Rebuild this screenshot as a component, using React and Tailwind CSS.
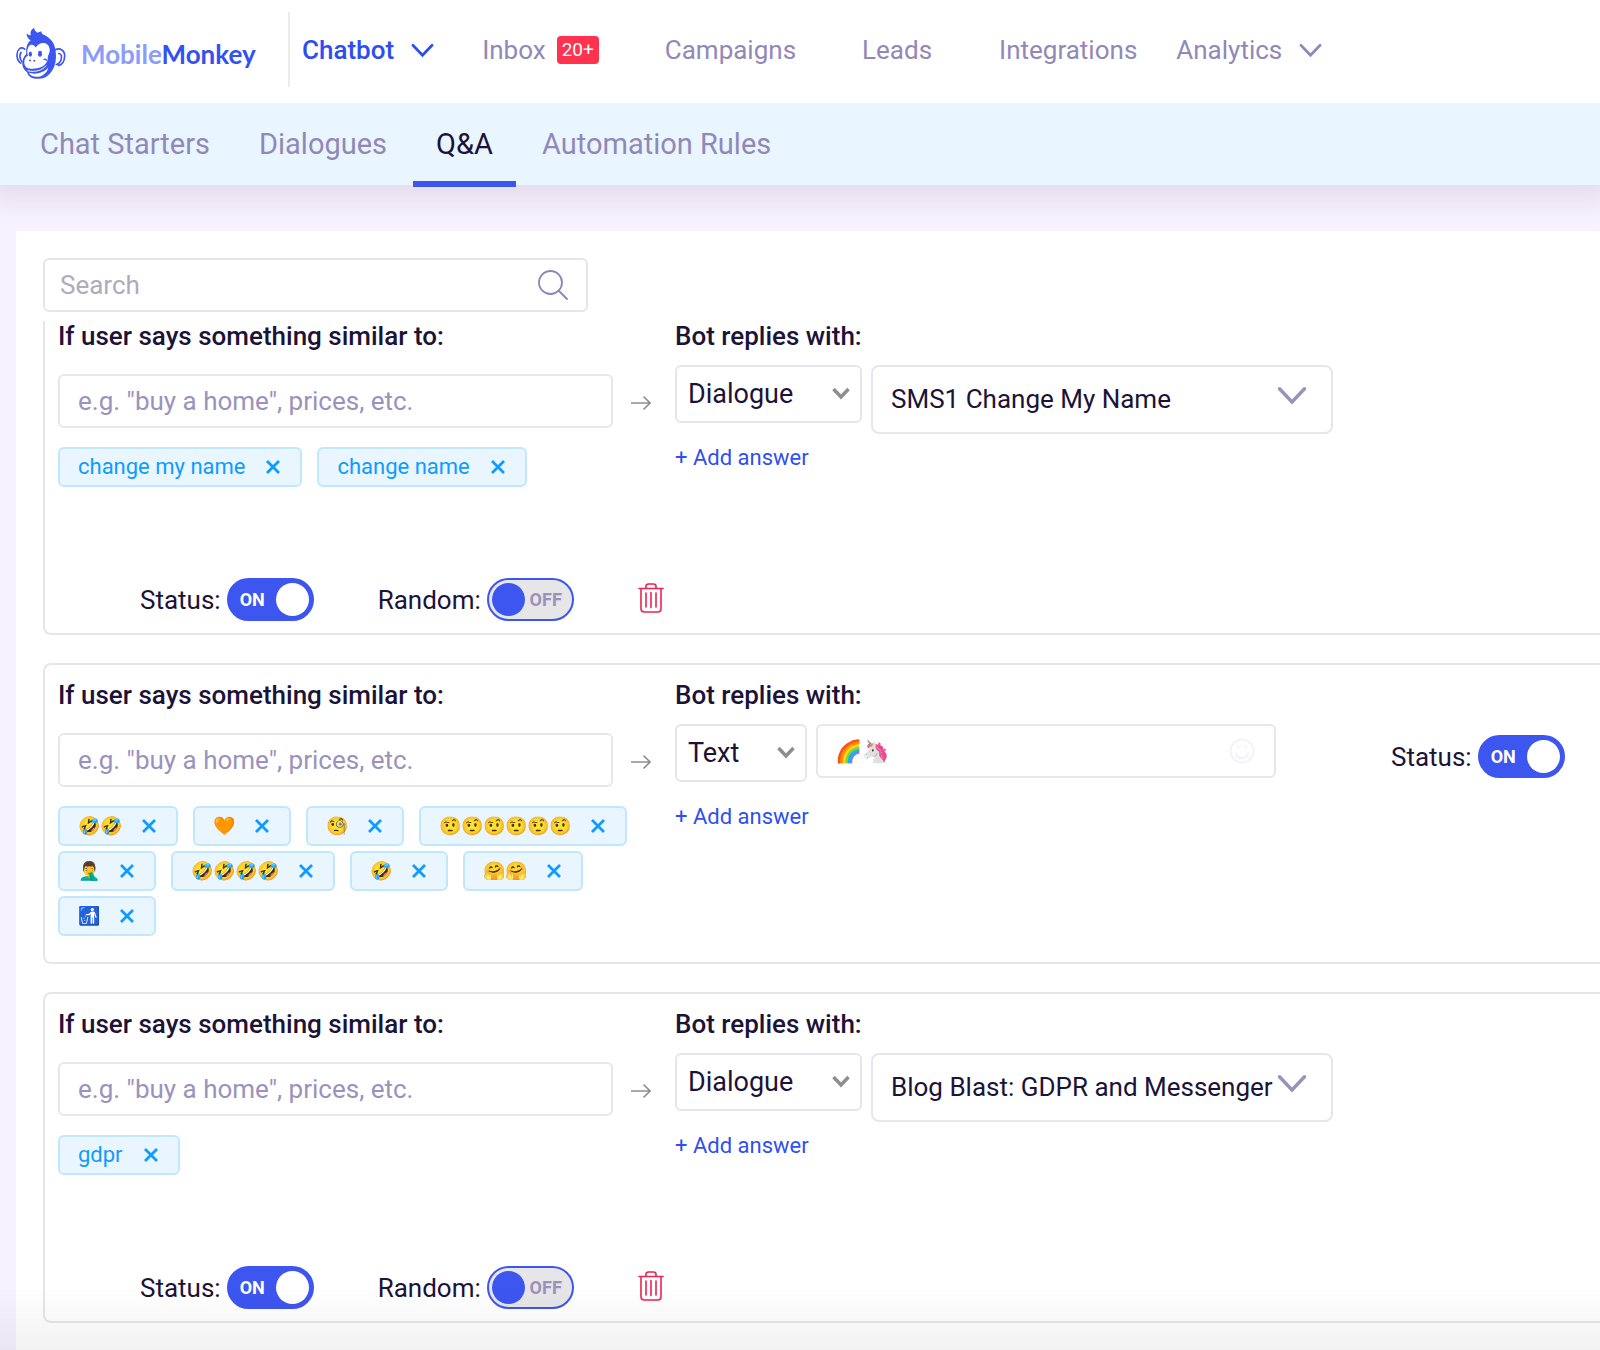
import { useState } from 'react';

const navItems = [
  { label: 'Inbox', badge: '20+', className: 'ml-12' },
  { label: 'Campaigns', className: 'ml-[66px]' },
  { label: 'Leads', className: 'ml-[66px]' },
  { label: 'Integrations', className: 'ml-[67px]' },
  { label: 'Analytics', caret: true, className: 'ml-[39px]' },
];

const tabs = ['Chat Starters', 'Dialogues', 'Q&A', 'Automation Rules'];

const rules = [
  { id: 1, phrases: ['change my name', 'change name'], type: 'Dialogue', reply: 'SMS1 Change My Name', random: true },
  {
    id: 2,
    phrases: ['🤣🤣', '🧡', '🧐', '🤨🤨🤨🤨🤨🤨', '🤦‍♂️', '🤣🤣🤣🤣', '🤣', '🤗🤗', '🚮'],
    emoji: true,
    type: 'Text',
    reply: '🌈🦄',
  },
  { id: 3, phrases: ['gdpr'], type: 'Dialogue', reply: 'Blog Blast: GDPR and Messenger', random: true },
];

function Logo() {
  return (
    <svg viewBox="18 18 150 158" className="w-[50px] h-[53px] shrink-0" aria-hidden="true">
      <g fill="none" stroke="#3d56f0" strokeWidth="5" strokeLinecap="round">
        <path d="M44 84C32 74 20 86 21 104c1 11 5 18 11 22M33 94c-5 8-3 20 3 28" />
        <path d="M136 86c14-8 29 3 28 20-1 14-8 25-18 27M146 97c9 0 10 10 7 19-3 8-8 13-14 14" />
      </g>
      <path
        fill="#3d56f0"
        d="M49 98C47 78 53 63 62 58C54 52 49 44 50 36C55 41 59 43 62 42C60 32 64 25 72 20C73 27 77 31 82 35C86 34 90 31 94 30C94 34 96 37 98 39C116 46 132 60 136 84C140 108 138 128 128 146C118 164 102 174 84 173C66 173 54 166 51 153C44 148 38 141 37 130C36 118 41 106 49 98Z"
      />
      <path
        fill="#fff"
        d="M54 104C50 92 52 76 62 71C70 69 76 76 77 79C84 68 100 60 112 70C121 78 121 92 115 102C112 108 115 114 111 122C103 138 80 145 58 142C46 140 42 130 43 120C44 112 48 106 54 104Z"
      />
      <path fill="#fff" d="M57 155C76 161 100 156 115 139C111 157 94 168 80 167C68 167 60 163 57 155Z" />
      <path fill="none" stroke="#fff" strokeWidth="3" strokeLinecap="round" d="M54 149C76 154 96 148 108 134" />
      <path fill="none" stroke="#3d56f0" strokeWidth="4" strokeLinecap="round" d="M102 115C105 113 108 115 110 118" />
      <ellipse cx="61" cy="99" rx="5" ry="8" fill="#3d56f0" />
      <ellipse cx="90" cy="98" rx="6" ry="9" fill="#3d56f0" />
      <circle cx="60" cy="118" r="3" fill="#3d56f0" />
      <circle cx="73" cy="119" r="3" fill="#3d56f0" />
    </svg>
  );
}

function Caret({ className }) {
  return (
    <svg viewBox="0 0 24 16" className={className} fill="none" stroke="currentColor" strokeWidth="2.8" strokeLinecap="round" aria-hidden="true">
      <path d="M2 3L12 13.500L22 3" />
    </svg>
  );
}

function Toggle({ label, defaultOn }) {
  const [on, setOn] = useState(defaultOn);
  return (
    <label className="flex items-center gap-1.5 text-[26px] leading-[30px] cursor-pointer">
      {label}
      <input type="checkbox" role="switch" checked={on} onChange={() => setOn(!on)} className="sr-only" />
      <span
        className={`flex items-center justify-between w-[87px] h-[43px] rounded-full border-2 border-[#3d56f0] text-lg font-bold ${
          on ? 'bg-[#3d56f0] text-white pl-[11px] pr-[3px]' : 'bg-[#e6e6e9] text-[#9a92bd] flex-row-reverse pl-[3px] pr-[10px]'
        }`}
      >
        {on ? 'ON' : 'OFF'}
        <span className={`size-[33px] rounded-full ${on ? 'bg-white' : 'bg-[#3d56f0]'}`} />
      </span>
    </label>
  );
}

function Chip({ text, emoji }) {
  return (
    <li
      className={`flex items-center h-10 pl-[18px] pr-5 rounded-md border-2 border-[#bfe7fd] bg-[#e9f6ff] leading-7 text-[#0f9bff] ${
        emoji ? 'gap-5 text-lg' : 'gap-[21px] text-[22px]'
      }`}
    >
      {text}
      <button type="button" aria-label={`Remove ${text}`}>
        <svg viewBox="0 0 14 14" className="size-[14px]" stroke="currentColor" strokeWidth="2.8" aria-hidden="true">
          <path d="M1 1L13 13M13 1L1 13" />
        </svg>
      </button>
    </li>
  );
}

function TrashIcon() {
  return (
    <svg viewBox="0 0 26 30" className="w-[26px] h-[30px]" fill="none" stroke="#ea2350" strokeWidth="1.6" strokeLinecap="round" aria-hidden="true">
      <path d="M1 5.500h24M8 5V3.500q0-2.500 2.500-2.500h5q2.500 0 2.500 2.500V5" />
      <path d="M3 6v19.500q0 3.500 3.500 3.500h13q3.500 0 3.500-3.500V6M8 10v14M13 9.500v15M18 10v14" />
    </svg>
  );
}

function Reply({ rule }) {
  return (
    <div className="flex items-start gap-[9px] mt-[14px]">
      <div className="relative">
        <select
          aria-label="Reply type"
          defaultValue={rule.type}
          className={`appearance-none h-[58px] pl-[11px] rounded-md border-2 border-[#e6e6ea] bg-white text-[27px] ${
            rule.type === 'Text' ? 'w-[132px]' : 'w-[187px]'
          }`}
        >
          <option>Dialogue</option>
          <option>Text</option>
        </select>
        <svg viewBox="0 0 18 13" className="absolute right-3 top-[22px] w-[18px] h-[13px] pointer-events-none" fill="none" stroke="#8e8e8e" strokeWidth="3.5" aria-hidden="true">
          <path d="M1.500 2L9 10L16.500 2" />
        </svg>
      </div>
      {rule.type === 'Text' ? (
        <div className="flex items-center w-[460px] h-[54px] pl-[17px] pr-[19px] rounded-md border-2 border-[#e6e6ee]">
          <input aria-label="Reply text" defaultValue={rule.reply} className="flex-1 min-w-0 text-[22px] outline-none" />
          <button type="button" aria-label="Insert emoji">
            <svg viewBox="0 0 26 26" className="size-[26px]" fill="none" stroke="#f3f1fc" strokeWidth="2" strokeLinecap="round" aria-hidden="true">
              <circle cx="13" cy="13" r="11.500" />
              <path d="M7 15c1 7 11 7 12 0M9 8v1.500M17 8v1.500" />
            </svg>
          </button>
        </div>
      ) : (
        <div className="relative">
          <select
            aria-label="Dialogue"
            defaultValue={rule.reply}
            className="appearance-none w-[462px] h-[69px] pl-[18px] pr-14 rounded-lg border-2 border-[#e6e6ee] bg-white text-[26px]"
          >
            <option>{rule.reply}</option>
          </select>
          <Caret className="absolute right-[26px] top-5 w-[30px] h-[20px] text-[#9a92bd] pointer-events-none" />
        </div>
      )}
    </div>
  );
}

function RuleCard({ rule, first }) {
  return (
    <li
      className={`border-2 border-r-0 border-[#e6e6e9] pl-[13px] ${rule.random ? 'pb-3' : 'pb-[26px]'} ${
        first ? 'border-t-0 rounded-bl-lg' : 'pt-[15px] rounded-l-lg'
      }`}
    >
      <div className={`flex items-start ${rule.random ? 'min-h-[257px]' : ''}`}>
        <div className="w-[617px] shrink-0">
          <label htmlFor={`phrase-${rule.id}`} className="block text-[26px] leading-[30px] font-medium">
            If user says something similar to:
          </label>
          <div className="flex items-center gap-[18px] mt-[23px]">
            <input
              id={`phrase-${rule.id}`}
              placeholder={'e.g. "buy a home", prices, etc.'}
              className="w-[555px] h-[54px] px-[18px] rounded-md border-2 border-[#e6e6ee] text-[26px] placeholder:text-[#9a92bd]"
            />
            <svg viewBox="0 0 20 16" className="w-5 h-4 mt-1" fill="none" stroke="#8e8e8e" strokeWidth="1.600" aria-hidden="true">
              <path d="M0 8h19M12.500 1.500L19 8l-6.500 6.500" />
            </svg>
          </div>
          <ul className="flex flex-wrap gap-x-[15px] gap-y-[5px] mt-[19px]">
            {rule.phrases.map((text) => (
              <Chip key={text} text={text} emoji={rule.emoji} />
            ))}
          </ul>
        </div>
        <div className="shrink-0">
          <h2 className="text-[26px] leading-[30px] font-medium">Bot replies with:</h2>
          <Reply rule={rule} />
          <button type="button" className={`block text-[22px] leading-7 text-[#2f4ff0] ${rule.random ? 'mt-[10px]' : 'mt-[21px]'}`}>
            + Add answer
          </button>
        </div>
        {!rule.random && (
          <div className="ml-[115px] mt-[55px] shrink-0">
            <Toggle label="Status:" defaultOn />
          </div>
        )}
      </div>
      {rule.random && (
        <div className="flex items-center pl-[82px]">
          <Toggle label="Status:" defaultOn />
          <div className="ml-16">
            <Toggle label="Random:" defaultOn={false} />
          </div>
          <button type="button" aria-label="Delete" className="ml-16 mb-1">
            <TrashIcon />
          </button>
        </div>
      )}
    </li>
  );
}

export default function App() {
  return (
    <div className="min-h-screen flex flex-col overflow-x-hidden bg-[#f7f2ff] font-['Roboto',sans-serif] text-[#1b1338]">
      <header className="relative z-10 flex items-center h-[103px] bg-white text-[26px] leading-[30px] text-[#9288b8]">
        <a href="#home" className="flex items-center gap-[15px] w-[272px] pl-4 pt-1 font-['Lato',sans-serif] text-[26px] font-bold text-[#3351f0]">
          <Logo />
          <span>
            <span className="text-[#8b9cfa]">Mobile</span>Monkey
          </span>
        </a>
        <nav className="flex items-center h-[75px] ml-4 pl-3 -mt-1 border-l-2 border-[#ececef]">
          <a href="#chatbot" className="flex items-center gap-[17px] font-medium text-[#2d4df0]">
            Chatbot
            <Caret className="w-[23px] h-4" />
          </a>
          {navItems.map(({ label, badge, caret, className }) => (
            <a key={label} href={`#${label.toLowerCase()}`} className={`flex items-center ${className}`}>
              {label}
              {badge && <span className="ml-[11px] px-[5px] rounded bg-[#ff334f] text-[19px] leading-7 text-white">{badge}</span>}
              {caret && <Caret className="w-[23px] h-4 ml-[17px]" />}
            </a>
          ))}
        </nav>
      </header>

      <nav className="relative flex h-[82px] pl-[17px] gap-[3px] bg-[#e9f6ff] shadow-[0_0_28px_14px_rgba(40,20,60,0.10)] text-[29px] leading-[82px]">
        {tabs.map((tab) => (
          <a
            key={tab}
            href="#tab"
            className={`h-[84px] px-[23px] ${tab === 'Q&A' ? 'border-b-[6px] border-[#3d56f0] text-[#1b1338]' : 'text-[#9288b8]'}`}
          >
            {tab}
          </a>
        ))}
      </nav>

      <main className="relative flex-1 mt-[46px] ml-4 pl-[27px] pt-[27px] bg-white">
        <div className="flex items-center w-[545px] h-[54px] pl-[15px] pr-[18px] rounded-md border-2 border-[#e6e6e9]">
          <input aria-label="Search" placeholder="Search" className="flex-1 min-w-0 text-[26px] outline-none placeholder:text-[#aeabbd]" />
          <svg viewBox="0 0 30 30" className="size-[30px]" fill="none" stroke="#8d84b8" strokeWidth="1.800" strokeLinecap="round" aria-hidden="true">
            <circle cx="12.500" cy="12.500" r="11.500" />
            <path d="M20.500 20.500L29 29" />
          </svg>
        </div>
        <ul className="flex flex-col gap-7 mt-[9px]">
          {rules.map((rule, i) => (
            <RuleCard key={rule.id} rule={rule} first={i === 0} />
          ))}
        </ul>
      </main>
      <div className="fixed inset-x-0 bottom-0 h-16 bg-linear-to-b from-transparent to-black/5 pointer-events-none" />
    </div>
  );
}
